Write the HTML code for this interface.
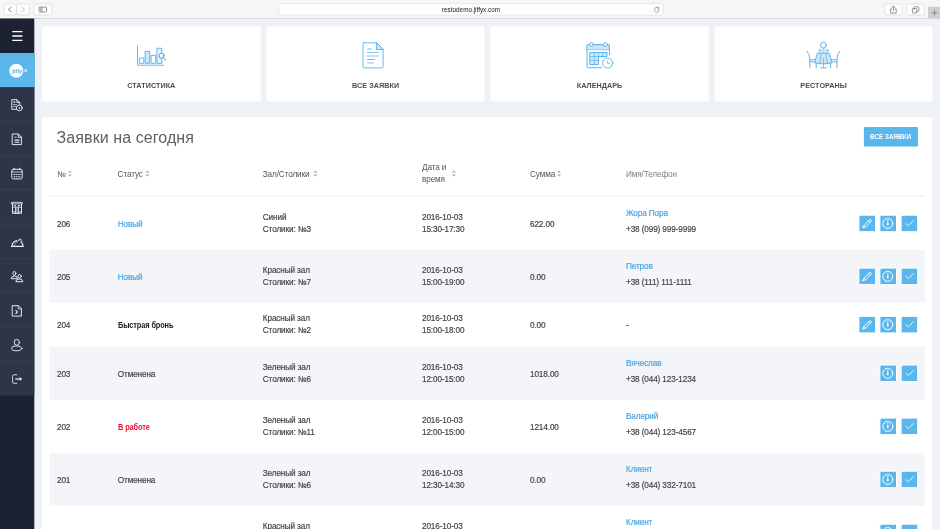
<!DOCTYPE html>
<html lang="ru">
<head>
<meta charset="utf-8">
<title>restodemo.jiffyx.com</title>
<style>
*{box-sizing:border-box;margin:0;padding:0}
html,body{width:940px;height:529px;overflow:hidden;background:#eef1f5;font-family:"Liberation Sans",sans-serif;color:#444}
#chrome{position:absolute;left:0;top:0;width:940px;height:18.5px}
#url{position:absolute;left:278.5px;top:3.5px;width:385px;height:11.7px;font-size:6.35px;line-height:11px;text-align:center;color:#222;padding-right:0}
.lbl{position:absolute;width:218px;top:81.3px;text-align:center;font-size:7.2px;font-weight:bold;letter-spacing:.06px;color:#4e4e4e;line-height:10px}
#title{position:absolute;left:56.6px;top:127px;font-size:16px;line-height:22px;color:#606060;letter-spacing:.08px;white-space:nowrap}
#allbtn{position:absolute;left:864px;top:127px;width:54px;height:19.6px;color:#fff;font-size:7.9px;font-weight:bold;text-align:center;line-height:20.2px;white-space:nowrap}
#allbtn span{display:inline-block;transform:scaleX(.8)}
.th{position:absolute;font-size:8.2px;line-height:12px;color:#555;white-space:nowrap;letter-spacing:-.12px}
.c{position:absolute;font-size:8.2px;line-height:12px;color:#444;white-space:nowrap;-webkit-text-stroke:.18px #444;letter-spacing:-.12px}
.c.blue{color:#4aa6e2;-webkit-text-stroke:.2px #4aa6e2}
.c.b{font-weight:bold;color:#1d1d1d;-webkit-text-stroke:0;transform-origin:0 50%;transform:scaleX(.9)}
.c.r{font-weight:bold;color:#e8112d;-webkit-text-stroke:0;transform-origin:0 50%;transform:scaleX(.9)}
#txt{position:absolute;left:0;top:0;width:940px;height:529px;will-change:transform}
#ico,#bg{position:absolute;left:0;top:0;width:940px;height:529px;pointer-events:none}
</style>
</head>
<body>
<svg id="bg" viewBox="0 0 940 529">
<rect x="0" y="0" width="940" height="18.100" fill="#f6f6f6"/>
<rect x="0" y="18" width="940" height=".8" fill="#d2d2d2"/>
<rect x="928" y="6.800" width="12" height="11.400" fill="#cecece"/>
<rect x="3.9" y="3.900" width="12.5" height="11.100" rx="2" fill="#fdfdfd" stroke="#d5d5d5" stroke-width=".6"/>
<rect x="16.7" y="3.900" width="12.6" height="11.100" rx="2" fill="#fdfdfd" stroke="#d5d5d5" stroke-width=".6"/>
<rect x="33.8" y="3.900" width="18.2" height="11.100" rx="2" fill="#fdfdfd" stroke="#d5d5d5" stroke-width=".6"/>
<rect x="884.6" y="3.900" width="17.7" height="11.100" rx="2" fill="#fdfdfd" stroke="#d5d5d5" stroke-width=".6"/>
<rect x="906.5" y="3.900" width="17.9" height="11.100" rx="2" fill="#fdfdfd" stroke="#d5d5d5" stroke-width=".6"/>
<rect x="278.600" y="3.600" width="384.600" height="11.500" rx="2" fill="#fefefe" stroke="#dcdcdc" stroke-width=".6"/>
<rect x="0" y="18.500" width="34.3" height="511" fill="#1c2231"/>
<rect x="0" y="87" width="34.3" height="308.6" fill="#2d3648"/>
<rect x="0" y="120.78" width="34.3" height="1" fill="#364055"/>
<rect x="0" y="155.06" width="34.3" height="1" fill="#364055"/>
<rect x="0" y="189.34" width="34.3" height="1" fill="#364055"/>
<rect x="0" y="223.62" width="34.3" height="1" fill="#364055"/>
<rect x="0" y="257.90" width="34.3" height="1" fill="#364055"/>
<rect x="0" y="292.18" width="34.3" height="1" fill="#364055"/>
<rect x="0" y="326.46" width="34.3" height="1" fill="#364055"/>
<rect x="0" y="360.74" width="34.3" height="1" fill="#364055"/>
<rect x="0" y="53" width="34.8" height="34.1" fill="#5bb7eb"/>
<rect x="42.2" y="26.5" width="218.6" height="74.8" fill="#fff"/>
<rect x="266.5" y="26.5" width="217.9" height="74.8" fill="#fff"/>
<rect x="490.4" y="26.5" width="218.4" height="74.8" fill="#fff"/>
<rect x="714.8" y="26.5" width="217.6" height="74.8" fill="#fff"/>
<rect x="42.2" y="117" width="890.1" height="420" fill="#fff"/>
<rect x="49.6" y="195.700" width="875.2" height="1" fill="#e9edf2"/>
<rect x="49.6" y="250" width="875.2" height="52.7" fill="#f3f5f8"/>
<rect x="49.6" y="346.8" width="875.2" height="53" fill="#f3f5f8"/>
<rect x="49.6" y="453" width="875.2" height="53" fill="#f3f5f8"/>
<rect x="863.900" y="127" width="54.100" height="19.600" rx="1" fill="#5bb7eb"/>
</svg>
<div id="txt">
<div id="chrome">
  <div id="url">restodemo.jiffyx.com</div>
</div>

<div class="lbl" style="left:42.3px">СТАТИСТИКА</div>
<div class="lbl" style="left:266.6px">ВСЕ ЗАЯВКИ</div>
<div class="lbl" style="left:490.6px">КАЛЕНДАРЬ</div>
<div class="lbl" style="left:714.6px">РЕСТОРАНЫ</div>

<div id="title">Заявки на сегодня</div>
<div id="allbtn"><span>ВСЕ ЗАЯВКИ</span></div>

<div class="th" style="left:57px;top:169px">№</div>
<div class="th" style="left:117.6px;top:169px">Статус</div>
<div class="th" style="left:262.8px;top:169px">Зал/Столики</div>
<div class="th" style="left:422px;top:162px">Дата и</div>
<div class="th" style="left:422px;top:174px">время</div>
<div class="th" style="left:530px;top:169px">Сумма</div>
<div class="th" style="left:626px;top:169px;color:#808080">Имя/Телефон</div>
<div class="c" style="left:57px;top:219px">206</div>
<div class="c blue" style="left:117.8px;top:219px">Новый</div>
<div class="c" style="left:262.8px;top:212px">Синий</div>
<div class="c" style="left:262.8px;top:224px">Столики: №3</div>
<div class="c" style="left:422px;top:212px">2016-10-03</div>
<div class="c" style="left:422px;top:224px">15:30-17:30</div>
<div class="c" style="left:530px;top:219px">622.00</div>
<div class="c blue" style="left:626px;top:208px">Жора Пора</div>
<div class="c" style="left:626px;top:224px">+38 (099) 999-9999</div>
<div class="c" style="left:57px;top:272px">205</div>
<div class="c blue" style="left:117.8px;top:272px">Новый</div>
<div class="c" style="left:262.8px;top:265px">Красный зал</div>
<div class="c" style="left:262.8px;top:277px">Столики: №7</div>
<div class="c" style="left:422px;top:265px">2016-10-03</div>
<div class="c" style="left:422px;top:277px">15:00-19:00</div>
<div class="c" style="left:530px;top:272px">0.00</div>
<div class="c blue" style="left:626px;top:261px">Петров</div>
<div class="c" style="left:626px;top:277px">+38 (111) 111-1111</div>
<div class="c" style="left:57px;top:320px">204</div>
<div class="c b" style="left:117.8px;top:320px">Быстрая бронь</div>
<div class="c" style="left:262.8px;top:313px">Красный зал</div>
<div class="c" style="left:262.8px;top:325px">Столики: №2</div>
<div class="c" style="left:422px;top:313px">2016-10-03</div>
<div class="c" style="left:422px;top:325px">15:00-18:00</div>
<div class="c" style="left:530px;top:320px">0.00</div>
<div class="c" style="left:626px;top:320px">-</div>
<div class="c" style="left:57px;top:369px">203</div>
<div class="c" style="left:117.8px;top:369px">Отменена</div>
<div class="c" style="left:262.8px;top:362px">Зеленый зал</div>
<div class="c" style="left:262.8px;top:374px">Столики: №6</div>
<div class="c" style="left:422px;top:362px">2016-10-03</div>
<div class="c" style="left:422px;top:374px">12:00-15:00</div>
<div class="c" style="left:530px;top:369px">1018.00</div>
<div class="c blue" style="left:626px;top:358px">Вячеслав</div>
<div class="c" style="left:626px;top:374px">+38 (044) 123-1234</div>
<div class="c" style="left:57px;top:422px">202</div>
<div class="c r" style="left:117.8px;top:422px">В работе</div>
<div class="c" style="left:262.8px;top:415px">Зеленый зал</div>
<div class="c" style="left:262.8px;top:427px">Столики: №11</div>
<div class="c" style="left:422px;top:415px">2016-10-03</div>
<div class="c" style="left:422px;top:427px">12:00-15:00</div>
<div class="c" style="left:530px;top:422px">1214.00</div>
<div class="c blue" style="left:626px;top:411px">Валерий</div>
<div class="c" style="left:626px;top:427px">+38 (044) 123-4567</div>
<div class="c" style="left:57px;top:475px">201</div>
<div class="c" style="left:117.8px;top:475px">Отменена</div>
<div class="c" style="left:262.8px;top:468px">Зеленый зал</div>
<div class="c" style="left:262.8px;top:480px">Столики: №6</div>
<div class="c" style="left:422px;top:468px">2016-10-03</div>
<div class="c" style="left:422px;top:480px">12:30-14:30</div>
<div class="c" style="left:530px;top:475px">0.00</div>
<div class="c blue" style="left:626px;top:464px">Клиент</div>
<div class="c" style="left:626px;top:480px">+38 (044) 332-7101</div>
<div class="c" style="left:57px;top:528px">200</div>
<div class="c" style="left:117.8px;top:528px">Отменена</div>
<div class="c" style="left:262.8px;top:521px">Красный зал</div>
<div class="c" style="left:262.8px;top:533px">Столики: №4</div>
<div class="c" style="left:422px;top:521px">2016-10-03</div>
<div class="c" style="left:422px;top:533px">12:00-14:00</div>
<div class="c" style="left:530px;top:528px">0.00</div>
<div class="c blue" style="left:626px;top:517px">Клиент</div>
<div class="c" style="left:626px;top:533px">+38 (044) 332-7101</div>
</div>
<svg id="ico" viewBox="0 0 940 529">
 <!-- browser chrome glyphs -->
 <g fill="none" stroke="#6a6a6a" stroke-width=".8" stroke-linecap="round" stroke-linejoin="round">
  <path d="M11.2 7.1L8.4 9.5l2.8 2.4"/>
  <path d="M21.8 7.1l2.8 2.4-2.8 2.4" stroke="#b4b4b4"/>
  <rect x="39.200" y="7.100" width="7.400" height="4.900" rx=".6" stroke-width=".7"/>
  <path d="M40.600 7.400v4.300" stroke-width="2" stroke="#b9b9b9" stroke-linecap="butt"/>
  <path d="M42 7.200v4.800" stroke-width=".6"/>
  <path d="M658.9 8.3a2.5 2.5 0 1 0 .5 1.9M657.6 7.2l1.5 1.1-1.4 1" stroke-width=".6"/>
  <path d="M891.6 8.9h-1v4.2h5.6V8.9h-1M893.4 10.8V6.2M891.9 7.6l1.5-1.5 1.5 1.5" stroke-width=".7"/>
  <rect x="912.4" y="8.6" width="4.4" height="4.4" rx=".8" stroke-width=".7"/>
  <path d="M914.2 8.4V7.6q0-.8.8-.8h3q.8 0 .8.800v3q0 .8-.8.800h-.9" stroke-width=".7"/>
 </g>
 <path d="M931.800 12.800h5.400M934.500 10.100v5.400" stroke="#6e6e6e" stroke-width=".7" fill="none"/>
 <!-- hamburger -->
 <path d="M12.300 31.600h10.100M12.300 36h10.100M12.300 40.400h10.100" stroke="#fff" stroke-width="1.3" fill="none"/>
 <!-- logo -->
 <circle cx="16.3" cy="70.800" r="7" fill="#fff"/>
 <text x="17.300" y="72.900" font-family="Liberation Sans, sans-serif" font-size="6.200" font-weight="bold" fill="#5bb7eb" text-anchor="middle" letter-spacing="-.2">jiffy</text>
 <text x="24.300" y="72.300" font-family="Liberation Sans, sans-serif" font-size="5.200" font-weight="bold" fill="#fff">x</text>
 <!-- sidebar icons -->
 <g fill="none" stroke="#eceef2" stroke-width=".95" stroke-linejoin="round" stroke-linecap="round">
  <!-- 1 doc + circle -->
  <path d="M16.4 109.3h-4.6v-9.6h5.2l2.7 2.7v2.4"/>
  <path d="M16.9 99.9v2.6h2.6"/>
  <path d="M13.6 102.2h1.6" stroke-width="1.6" stroke-linecap="butt"/>
  <path d="M13.4 104.6h3.2M13.4 106.6h2.2" stroke-width=".7"/>
  <circle cx="19.300" cy="107.900" r="2.900" fill="#2d3648"/>
  <circle cx="19.3" cy="107.9" r=".8" fill="#eceef2" stroke="none"/>
  <!-- 2 doc -->
  <path d="M12.6 134h5.8l3 3v7.6h-8.800z"/>
  <path d="M18.2 134.2v3h3"/>
  <path d="M14.6 137.2h1.6" stroke-width=".7"/>
  <path d="M14.6 140.1h4.8M14.6 142.3h4.800" stroke-width="1.1" stroke-linecap="butt"/>
  <!-- 3 calendar -->
  <rect x="11.8" y="169.3" width="10.4" height="9.6" rx="1.5"/>
  <path d="M11.9 172h10.200" stroke-width=".8"/>
  <path d="M14.200 168.200v1.400M19.800 168.200v1.400" stroke-width="1"/>
  <path d="M13.700 174.500h6.800M13.700 176.800h6.800" stroke-width="1.100" stroke-dasharray="1.300 .55" stroke-linecap="butt"/>
  <!-- 4 building -->
  <rect x="11.700" y="202.400" width="10.600" height="1.500" stroke-width=".8"/>
  <path d="M12.500 204v9.300h9V204"/>
  <path d="M12.500 207.100h9M12.500 211.900h2.800M18.700 211.900h2.800" stroke-width=".8"/>
  <path d="M15.500 207.100v6.200M18.500 207.100v6.200M17 208v5.300" stroke-width=".8"/>
  <path d="M14.200 205.500h1.700M18.100 205.500h1.700" stroke-width="1.100" stroke-linecap="butt"/>
  <!-- 5 cloche -->
  <path d="M11.500 246.400h11.600" stroke-width="1.100"/>
  <path d="M11.900 246.200q.3-4.300 4.900-5.600M23 246.200q-.2-2.600-2-4.300" stroke-width="1.100"/>
  <path d="M13.900 246q.5-2.900 3.500-4.100" stroke-width=".7" opacity=".7"/>
  <path d="M17.300 241.600l1.500-1.500M19.800 238.600v2.200M18.700 239.700l2.600-.1M21.200 241.100l1.200-.1" stroke-width=".7" opacity=".85"/>
  <!-- 6 users -->
  <ellipse cx="14.400" cy="273.300" rx="1.500" ry="1.900"/>
  <path d="M11.200 278.300q0-2.300 3.200-2.300t3.200 2.300z"/>
  <circle cx="19.600" cy="276.300" r="1.700" fill="#2d3648"/>
  <path d="M15.800 281.300q0-2.300 3.500-2.300t3.500 2.300z" fill="#2d3648"/>
  <!-- 7 doc chevron -->
  <path d="M12.600 305.700h5.800l3 3v7.400h-8.800z"/>
  <path d="M18.200 305.900v3h3" stroke-width=".8"/>
  <path d="M15.900 310.300l1.600 1.600-1.600 1.600" stroke-width="1.100"/>
  <!-- 8 user -->
  <ellipse cx="16.800" cy="342.300" rx="2.600" ry="3"/>
  <ellipse cx="16.800" cy="348.400" rx="5.200" ry="2.400"/>
  <!-- 9 logout -->
  <path d="M16.800 374.800h-2.700q-1.500 0-1.500 1.500v5.500q0 1.500 1.500 1.500h2.700" opacity=".9"/>
  <path d="M15.300 379h4.600" stroke-width="1.400" stroke-linecap="butt" opacity=".9"/>
  <path d="M19.700 376.900l2.500 2.100-2.500 2.100z" fill="#eceef2" stroke="none"/>
 </g>
 <!-- card icons -->
 <g fill="none" stroke="#55b3ea" stroke-width=".95" stroke-linejoin="round" stroke-linecap="round">
  <!-- stats -->
  <path d="M137.500 46v19.200h26.400" stroke-width=".9"/>
  <rect x="139.700" y="58.100" width="4.100" height="5.200"/>
  <rect x="145.500" y="51.400" width="4.300" height="11.900" fill="#cfe6f6"/>
  <rect x="151.500" y="55.400" width="4.300" height="7.900"/>
  <rect x="157.300" y="48.300" width="4.500" height="15" fill="#e6f2fb"/>
  <circle cx="161.600" cy="55.800" r="2.500" fill="#fff" stroke="#3f97cf"/>
  <path d="M163.400 57.700l2.300 2.300" stroke="#3f97cf" stroke-width="1"/>
  <!-- document -->
  <path d="M364 42.800h12.400l6.700 6.700v17.400q0 1-1 1h-18.100q-1 0-1-1v-23.100q0-1 1-1z" stroke-width=".9"/>
  <path d="M376.400 42.800v6.700h6.700z" fill="#c5e1f5"/>
  <path d="M367.100 49h4.600M367.100 59.500h7.800" stroke-width=".9" stroke-linecap="butt"/>
  <path d="M367.100 52.500h11.600" stroke-width=".7" stroke-linecap="butt"/>
  <path d="M367.100 56h11.600M367.100 63h6.700" stroke-width="1.300" stroke="#a9d6f3" stroke-linecap="butt"/>
  <!-- calendar -->
  <path d="M609.500 55V45.600q0-1-1-1h-20.500q-1 0-1 1v21.100q0 1 1 1h13.600"/>
  <path d="M587.300 44.900h21.900v4.800h-21.900z" fill="#cfe6f6" stroke-width=".6"/>
  <circle cx="591.400" cy="44.500" r="1.900" fill="#fff"/>
  <circle cx="605.500" cy="44.500" r="1.900" fill="#fff"/>
  <path d="M590.100 52.500h16.900v4h-8.500v8h-8.400z" fill="#cfe6f6"/>
  <path d="M594.300 52.500v12M598.500 52.500v4M602.800 52.500v4M590.100 56.500h8.400M590.100 60.500h8.400" stroke-width=".7"/>
  <circle cx="607.600" cy="63.100" r="5" fill="#fff"/>
  <path d="M607.600 60.600v2.800h2.100" stroke-width=".7"/>
  <!-- restaurant -->
  <circle cx="823.500" cy="45.200" r="2.900"/>
  <path d="M823 48.100v5M824 48.100v5" stroke-width=".6"/>
  <circle cx="819.800" cy="50.300" r="1.200" stroke-width=".7"/>
  <circle cx="827.200" cy="50.300" r="1.200" stroke-width=".7"/>
  <path d="M819.800 51.500v1.600M827.200 51.500v1.600" stroke-width=".6"/>
  <path d="M817.700 53.200h11.600l2.700 9.700q-8.500 2.200-17 0z" fill="#cfe6f6"/>
  <path d="M821.300 53.400l-1.700 10.400M825.700 53.400l1.700 10.400M823.500 58v9.400" stroke-width=".7"/>
  <path d="M820.700 67.800h5.600" stroke-width="1"/>
  <path d="M807.100 51.300q2.600 3 2.800 8.200v8.300M809.900 59.700h5.700M809.900 61.900h5.200M816.200 63.500v4.300" />
  <path d="M839.700 51.300q-2.600 3-2.800 8.200v8.300M836.900 59.700h-5.700M836.900 61.900h-5.200M830.600 63.500v4.300" />
 </g>
 <!-- sort arrows -->
 <g fill="#adadad">
  <path d="M67.7 172.600l2.100-2.100 2.100 2.100zM67.7 174.500l2.100 2.100 2.100-2.100z"/>
  <path d="M145.3 172.600l2.100-2.100 2.100 2.100zM145.3 174.500l2.100 2.100 2.100-2.100z"/>
  <path d="M313.3 172.600l2.100-2.100 2.100 2.100zM313.3 174.500l2.100 2.100 2.100-2.100z"/>
  <path d="M451.8 172.600l2.100-2.100 2.100 2.100zM451.8 174.500l2.100 2.100 2.100-2.100z"/>
  <path d="M556.9 172.600l2.100-2.100 2.100 2.100zM556.9 174.500l2.100 2.100 2.100-2.100z"/>
 </g>
<!-- action buttons -->
<g fill="none" stroke="#fff" stroke-linecap="round" stroke-linejoin="round">
<g transform="translate(858.9 215.2)"><rect width="16.6" height="16.5" rx=".9" fill="#5bb7eb"/><path d="M4.900 10.200l5.500-5.500a1.100 1.100 0 0 1 1.600 1.600l-5.500 5.500-2.400.8zM9.500 5.600l1.600 1.600M4.900 10.200l1.600 1.600" fill="none" stroke="#fff" stroke-width=".9" stroke-linejoin="round" stroke-linecap="round"/></g>
<g transform="translate(879.9 215.2)"><rect width="16.6" height="16.5" rx=".9" fill="#5bb7eb"/><circle cx="7.900" cy="8.300" r="5" fill="none" stroke="#fff" stroke-width="1"/><path d="M7.900 7.200v3" stroke="#fff" stroke-width="1.500" fill="none" stroke-linecap="butt"/><circle cx="7.900" cy="5.700" r=".8" fill="#fff" stroke="none"/></g>
<g transform="translate(901.1 215.2)"><rect width="16.6" height="16.5" rx=".9" fill="#5bb7eb"/><path d="M4.800 8.300l2.400 2.200 4.900-5" fill="none" stroke="#fff" stroke-width=".85" stroke-linecap="round" stroke-linejoin="round"/></g>
<g transform="translate(858.9 268.1)"><rect width="16.6" height="16.5" rx=".9" fill="#5bb7eb"/><path d="M4.900 10.200l5.500-5.500a1.100 1.100 0 0 1 1.600 1.600l-5.500 5.500-2.400.8zM9.500 5.600l1.600 1.600M4.900 10.200l1.600 1.600" fill="none" stroke="#fff" stroke-width=".9" stroke-linejoin="round" stroke-linecap="round"/></g>
<g transform="translate(879.9 268.1)"><rect width="16.6" height="16.5" rx=".9" fill="#5bb7eb"/><circle cx="7.900" cy="8.300" r="5" fill="none" stroke="#fff" stroke-width="1"/><path d="M7.900 7.200v3" stroke="#fff" stroke-width="1.500" fill="none" stroke-linecap="butt"/><circle cx="7.900" cy="5.700" r=".8" fill="#fff" stroke="none"/></g>
<g transform="translate(901.1 268.1)"><rect width="16.6" height="16.5" rx=".9" fill="#5bb7eb"/><path d="M4.800 8.300l2.400 2.200 4.900-5" fill="none" stroke="#fff" stroke-width=".85" stroke-linecap="round" stroke-linejoin="round"/></g>
<g transform="translate(858.9 316.4)"><rect width="16.6" height="16.5" rx=".9" fill="#5bb7eb"/><path d="M4.900 10.200l5.500-5.500a1.100 1.100 0 0 1 1.600 1.600l-5.500 5.500-2.400.8zM9.500 5.600l1.600 1.600M4.900 10.200l1.600 1.600" fill="none" stroke="#fff" stroke-width=".9" stroke-linejoin="round" stroke-linecap="round"/></g>
<g transform="translate(879.9 316.4)"><rect width="16.6" height="16.5" rx=".9" fill="#5bb7eb"/><circle cx="7.900" cy="8.300" r="5" fill="none" stroke="#fff" stroke-width="1"/><path d="M7.900 7.200v3" stroke="#fff" stroke-width="1.500" fill="none" stroke-linecap="butt"/><circle cx="7.900" cy="5.700" r=".8" fill="#fff" stroke="none"/></g>
<g transform="translate(901.1 316.4)"><rect width="16.6" height="16.5" rx=".9" fill="#5bb7eb"/><path d="M4.800 8.300l2.400 2.200 4.900-5" fill="none" stroke="#fff" stroke-width=".85" stroke-linecap="round" stroke-linejoin="round"/></g>
<g transform="translate(879.9 365.0)"><rect width="16.6" height="16.5" rx=".9" fill="#5bb7eb"/><circle cx="7.900" cy="8.300" r="5" fill="none" stroke="#fff" stroke-width="1"/><path d="M7.900 7.200v3" stroke="#fff" stroke-width="1.500" fill="none" stroke-linecap="butt"/><circle cx="7.900" cy="5.700" r=".8" fill="#fff" stroke="none"/></g>
<g transform="translate(901.1 365.0)"><rect width="16.6" height="16.5" rx=".9" fill="#5bb7eb"/><path d="M4.800 8.300l2.400 2.200 4.900-5" fill="none" stroke="#fff" stroke-width=".85" stroke-linecap="round" stroke-linejoin="round"/></g>
<g transform="translate(879.9 418.1)"><rect width="16.6" height="16.5" rx=".9" fill="#5bb7eb"/><circle cx="7.900" cy="8.300" r="5" fill="none" stroke="#fff" stroke-width="1"/><path d="M7.900 7.200v3" stroke="#fff" stroke-width="1.500" fill="none" stroke-linecap="butt"/><circle cx="7.900" cy="5.700" r=".8" fill="#fff" stroke="none"/></g>
<g transform="translate(901.1 418.1)"><rect width="16.6" height="16.5" rx=".9" fill="#5bb7eb"/><path d="M4.800 8.300l2.400 2.200 4.900-5" fill="none" stroke="#fff" stroke-width=".85" stroke-linecap="round" stroke-linejoin="round"/></g>
<g transform="translate(879.9 471.2)"><rect width="16.6" height="16.5" rx=".9" fill="#5bb7eb"/><circle cx="7.900" cy="8.300" r="5" fill="none" stroke="#fff" stroke-width="1"/><path d="M7.900 7.200v3" stroke="#fff" stroke-width="1.500" fill="none" stroke-linecap="butt"/><circle cx="7.900" cy="5.700" r=".8" fill="#fff" stroke="none"/></g>
<g transform="translate(901.1 471.2)"><rect width="16.6" height="16.5" rx=".9" fill="#5bb7eb"/><path d="M4.800 8.300l2.400 2.200 4.900-5" fill="none" stroke="#fff" stroke-width=".85" stroke-linecap="round" stroke-linejoin="round"/></g>
<g transform="translate(879.9 524.2)"><rect width="16.6" height="16.5" rx=".9" fill="#5bb7eb"/><circle cx="7.900" cy="8.300" r="5" fill="none" stroke="#fff" stroke-width="1"/><path d="M7.900 7.200v3" stroke="#fff" stroke-width="1.500" fill="none" stroke-linecap="butt"/><circle cx="7.900" cy="5.700" r=".8" fill="#fff" stroke="none"/></g>
<g transform="translate(901.1 524.2)"><rect width="16.6" height="16.5" rx=".9" fill="#5bb7eb"/><path d="M4.800 8.300l2.400 2.200 4.900-5" fill="none" stroke="#fff" stroke-width=".85" stroke-linecap="round" stroke-linejoin="round"/></g>
</g>
</svg>

</body>
</html>
